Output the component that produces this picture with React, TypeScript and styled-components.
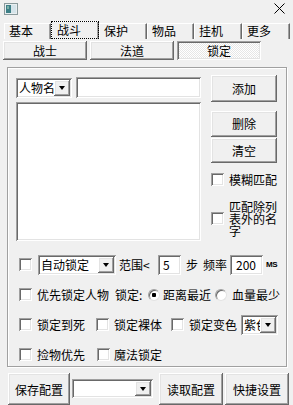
import React from "react";
import styled, { createGlobalStyle, css } from "styled-components";

const Global = createGlobalStyle`
  html, body { margin: 0; padding: 0; background: #f0f0f0; }
  body {
    font-family: "Noto Sans CJK SC", "Liberation Sans", sans-serif;
    font-size: 12px;
    color: #000;
  }
`;

const raised = css`
  box-shadow: inset -1px -1px 0 #696969, inset 1px 1px 0 #fff,
    inset -2px -2px 0 #a0a0a0, inset 2px 2px 0 #e3e3e3;
`;
const sunken = css`
  box-shadow: inset 1px 1px 0 #a0a0a0, inset -1px -1px 0 #fff,
    inset 2px 2px 0 #696969, inset -2px -2px 0 #e3e3e3;
`;

const Window = styled.div`
  width: 293px;
  height: 405px;
  overflow: hidden;
  display: flex;
  flex-direction: column;
  background: #f0f0f0;
`;

const TitleBar = styled.div`
  height: 21px;
  display: flex;
  justify-content: space-between;
  align-items: flex-start;
  padding: 3px 8px 0 4px;
  box-sizing: border-box;
`;

const TabStrip = styled.div`
  display: flex;
  align-items: flex-end;
  height: 18px;
  padding-left: 4px;
`;

const Tab = styled.div<{ $w: number; $active?: boolean }>`
  width: ${(p) => p.$w}px;
  height: ${(p) => (p.$active ? 18 : 16)}px;
  box-sizing: border-box;
  border-left: 1px solid #fff;
  border-top: 1px solid #fff;
  border-right: 1px solid #696969;
  box-shadow: inset -1px 0 0 #a0a0a0;
  padding-left: ${(p) => (p.$active ? 5 : 4)}px;
  line-height: ${(p) => (p.$active ? 16 : 14)}px;
  white-space: nowrap;
  ${(p) =>
    p.$active &&
    css`
      outline: 1px dotted #000;
      outline-offset: -1px;
    `}
`;

const ModeRow = styled.div`
  display: flex;
  gap: 3px;
  padding-left: 3px;
  margin-top: 2px;
  height: 19px;
`;

const ModeButton = styled.div<{ $active?: boolean }>`
  width: 84px;
  height: 19px;
  display: flex;
  align-items: center;
  justify-content: center;
  ${(p) =>
    p.$active
      ? css`
          ${sunken};
          background: repeating-conic-gradient(#fff 0 25%, #e6e6e6 0 50%) 0 0 / 2px 2px;
        `
      : raised}
`;

const Panel = styled.div`
  margin: 7px 0 0 7px;
  width: 280px;
  height: 301px;
  box-sizing: border-box;
  border: 1px solid #a0a0a0;
  box-shadow: inset 1px 1px 0 #fff, 1px 1px 0 #fff;
  display: flex;
  flex-direction: column;
`;

const TopSection = styled.div`
  display: flex;
  margin-top: 7px;
`;

const LeftCol = styled.div`
  margin-left: 8px;
  width: 185px;
  display: flex;
  flex-direction: column;
`;

const SearchRow = styled.div`
  display: flex;
  align-items: flex-end;
  gap: 4px;
  margin-top: 2px;
  height: 21px;
`;

const Field = styled.div<{ $w: number; $h: number; $pl?: number }>`
  width: ${(p) => p.$w}px;
  height: ${(p) => p.$h}px;
  flex-shrink: 0;
  box-sizing: border-box;
  background: #fff;
  ${sunken};
  padding-left: ${(p) => p.$pl ?? 4}px;
  line-height: ${(p) => p.$h}px;
  white-space: nowrap;
`;

const ListBox = styled.div`
  margin-top: 4px;
  height: 139px;
  background: #fff;
  ${sunken};
`;

const RightCol = styled.div`
  margin-left: 10px;
  width: 66px;
  display: flex;
  flex-direction: column;
`;

const Button = styled.div<{ $h: number; $mt?: number; $w?: number; $ml?: number }>`
  width: ${(p) => (p.$w ? `${p.$w}px` : "auto")};
  height: ${(p) => p.$h}px;
  margin-top: ${(p) => p.$mt ?? 0}px;
  margin-left: ${(p) => p.$ml ?? 0}px;
  flex-shrink: 0;
  display: flex;
  align-items: center;
  justify-content: center;
  ${raised};
  white-space: nowrap;
`;

const CheckRow = styled.div<{ $mt: number }>`
  display: flex;
  align-items: center;
  gap: 5px;
  margin-top: ${(p) => p.$mt}px;
  width: 75px;
`;

const WrapText = styled.div`
  width: 50px;
  flex-shrink: 0;
  line-height: 12px;
  word-break: break-all;
  line-break: anywhere;
`;

const Rows = styled.div`
  display: flex;
  flex-direction: column;
  gap: 8px;
  margin-top: 13px;
  padding-left: 11px;
`;

const Row = styled.div`
  display: flex;
  align-items: center;
  height: 22px;
`;

const Box = styled.span<{ $ml?: number }>`
  width: 13px;
  height: 13px;
  flex-shrink: 0;
  box-sizing: border-box;
  background: #fff;
  margin-left: ${(p) => p.$ml ?? 0}px;
  ${sunken};
`;

const Radio = styled.span<{ $ml?: number; $on?: boolean }>`
  width: 12px;
  height: 12px;
  flex-shrink: 0;
  border-radius: 50%;
  margin-left: ${(p) => p.$ml ?? 0}px;
  background: ${(p) =>
    p.$on ? "radial-gradient(circle, #000 0 2px, #fff 2.5px)" : "#fff"};
  border: 1px solid;
  border-color: #a0a0a0 #e3e3e3 #e3e3e3 #a0a0a0;
  box-sizing: border-box;
  box-shadow: inset 1px 1px 0 #696969;
`;

const Label = styled.span<{ $ml?: number; $w?: number }>`
  margin-left: ${(p) => p.$ml ?? 0}px;
  ${(p) => (p.$w ? `width: ${p.$w}px;` : "")}
  flex-shrink: 0;
  white-space: nowrap;
  line-height: 16px;
`;

const Units = styled.span`
  margin-left: 3px;
  font-family: "Liberation Sans", sans-serif;
  font-weight: bold;
  font-size: 8px;
  letter-spacing: -0.5px;
`;

const ComboFrame = styled.div<{ $w: number; $h: number; $ml?: number; $mt?: number }>`
  width: ${(p) => p.$w}px;
  height: ${(p) => p.$h}px;
  margin-left: ${(p) => p.$ml ?? 0}px;
  margin-top: ${(p) => p.$mt ?? 0}px;
  flex-shrink: 0;
  box-sizing: border-box;
  background: #fff;
  ${sunken};
  padding: 2px;
  display: flex;
`;

const ComboText = styled.div`
  flex: 1;
  overflow: hidden;
  white-space: nowrap;
  padding-left: 1px;
  line-height: 15px;
`;

const DropBtn = styled.div`
  width: 16px;
  flex-shrink: 0;
  background: #f0f0f0;
  ${raised};
  display: flex;
  align-items: center;
  justify-content: center;
  &::after {
    content: "";
    border-left: 3.5px solid transparent;
    border-right: 3.5px solid transparent;
    border-top: 4px solid #000;
  }
`;

const BottomRow = styled.div`
  display: flex;
  align-items: flex-start;
  margin-top: 6px;
  padding-left: 8px;
`;

function Combo(props: { w: number; h: number; ml?: number; mt?: number; text?: string }) {
  return (
    <ComboFrame $w={props.w} $h={props.h} $ml={props.ml} $mt={props.mt}>
      <ComboText>{props.text ?? ""}</ComboText>
      <DropBtn />
    </ComboFrame>
  );
}

const AppIcon = () => (
  <svg width="14" height="12" viewBox="0 0 14 12">
    <rect x="0.5" y="0.5" width="13" height="11" fill="#e8eef0" stroke="#8a9a9c" />
    <rect x="2" y="2" width="5" height="8" fill="#3d7f86" />
    <rect x="7" y="2" width="5" height="8" fill="#d5e4ea" />
    <rect x="3" y="3" width="2" height="3" fill="#79b0a8" />
  </svg>
);

const CloseIcon = () => (
  <svg width="11" height="11" viewBox="0 0 11 11">
    <path d="M0.5 0.5 L10.5 10.5 M10.5 0.5 L0.5 10.5" stroke="#000" strokeWidth="1" />
  </svg>
);

export default function App() {
  return (
    <>
      <Global />
      <Window>
        <TitleBar>
          <AppIcon />
          <CloseIcon />
        </TitleBar>
        <TabStrip>
          <Tab $w={47}>基本</Tab>
          <Tab $w={48} $active>战斗</Tab>
          <Tab $w={48}>保护</Tab>
          <Tab $w={47}>物品</Tab>
          <Tab $w={48}>挂机</Tab>
          <Tab $w={48}>更多</Tab>
        </TabStrip>
        <ModeRow>
          <ModeButton>战士</ModeButton>
          <ModeButton>法道</ModeButton>
          <ModeButton $active>锁定</ModeButton>
        </ModeRow>
        <Panel>
          <TopSection>
            <LeftCol>
              <SearchRow>
                <Combo w={56} h={20} text="人物名" />
                <Field $w={125} $h={21} />
              </SearchRow>
              <ListBox />
            </LeftCol>
            <RightCol>
              <Button $h={27}>添加</Button>
              <Button $h={26} $mt={9}>删除</Button>
              <Button $h={25} $mt={1}>清空</Button>
              <CheckRow $mt={9}>
                <Box />
                <Label>模糊匹配</Label>
              </CheckRow>
              <CheckRow $mt={13}>
                <Box />
                <WrapText>匹配除列表外的名字</WrapText>
              </CheckRow>
            </RightCol>
          </TopSection>
          <Rows>
            <Row>
              <Box />
              <Combo w={78} h={20} ml={6} text="自动锁定" />
              <Label $ml={3} $w={30}>范围&lt;</Label>
              <Field $w={23} $h={20} $pl={5} style={{ marginLeft: 9 }}>5</Field>
              <Label $ml={5} $w={12}>步</Label>
              <Label $ml={5} $w={24}>频率</Label>
              <Field $w={33} $h={20} $pl={6} style={{ marginLeft: 3 }}>200</Field>
              <Units>MS</Units>
            </Row>
            <Row>
              <Box />
              <Label $ml={5} $w={72}>优先锁定人物</Label>
              <Label $ml={6} $w={30}>锁定:</Label>
              <Radio $ml={3} $on />
              <Label $ml={3} $w={48}>距离最近</Label>
              <Radio $ml={4} />
              <Label $ml={5} $w={48}>血量最少</Label>
            </Row>
            <Row>
              <Box />
              <Label $ml={5} $w={48}>锁定到死</Label>
              <Box $ml={11} />
              <Label $ml={5} $w={48}>锁定裸体</Label>
              <Box $ml={9} />
              <Label $ml={5} $w={48}>锁定变色</Label>
              <Combo w={37} h={20} ml={4} text="紫色" />
            </Row>
            <Row>
              <Box />
              <Label $ml={5} $w={48}>捡物优先</Label>
              <Box $ml={12} />
              <Label $ml={4} $w={48}>魔法锁定</Label>
            </Row>
          </Rows>
        </Panel>
        <BottomRow>
          <Button $h={32} $w={62}>保存配置</Button>
          <Combo w={81} h={19} ml={2} mt={6} />
          <Button $h={32} $w={64} $ml={6}>读取配置</Button>
          <Button $h={32} $w={64} $ml={2}>快捷设置</Button>
        </BottomRow>
      </Window>
    </>
  );
}
